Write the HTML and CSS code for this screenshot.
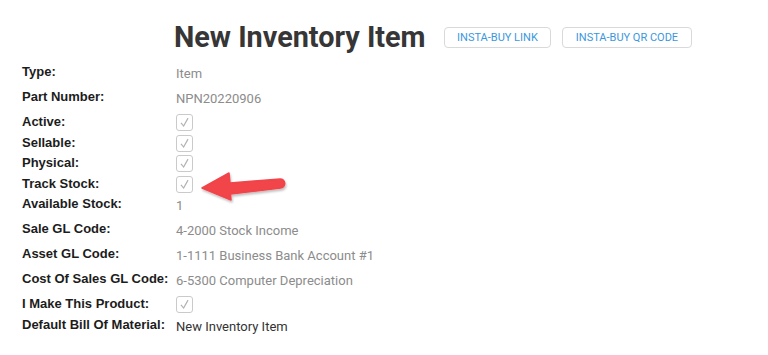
FILE: index.html
```html
<!DOCTYPE html>
<html lang="en">
<head>
    <meta charset="UTF-8">
    <title>New Inventory Item</title>
    <link rel="stylesheet" href="styles.css">
</head>
<body>
    <div class="header">
        <h1 class="title">New Inventory Item</h1>
        <button class="btn">INSTA-BUY LINK</button>
        <button class="btn">INSTA-BUY QR CODE</button>
    </div>

    <div class="fields">
        <div class="field">
            <div class="label">Type:</div>
            <div class="value">Item</div>
        </div>
        <div class="field">
            <div class="label">Part Number:</div>
            <div class="value">NPN20220906</div>
        </div>
        <div class="field check">
            <div class="label">Active:</div>
            <div class="value"><span class="cb"><svg viewBox="0 0 17 17"><path d="M4.5 9 L7.5 12.5 L12.5 3.5"/></svg></span></div>
        </div>
        <div class="field check">
            <div class="label">Sellable:</div>
            <div class="value"><span class="cb"><svg viewBox="0 0 17 17"><path d="M4.5 9 L7.5 12.5 L12.5 3.5"/></svg></span></div>
        </div>
        <div class="field check">
            <div class="label">Physical:</div>
            <div class="value"><span class="cb"><svg viewBox="0 0 17 17"><path d="M4.5 9 L7.5 12.5 L12.5 3.5"/></svg></span></div>
        </div>
        <div class="field check">
            <div class="label">Track Stock:</div>
            <div class="value">
                <span class="cb"><svg viewBox="0 0 17 17"><path d="M4.5 9 L7.5 12.5 L12.5 3.5"/></svg></span>
                <!-- callout arrow -->
                <svg class="arrow" width="100" height="42" viewBox="0 0 100 42">
                    <defs>
                        <filter id="sh" x="-20%" y="-30%" width="140%" height="170%">
                            <feDropShadow dx="1" dy="2" stdDeviation="1.2" flood-color="#000" flood-opacity="0.25"/>
                        </filter>
                    </defs>
                    <path d="M7 22 L34 7 L35 17 L85 13 A4.5 4.5 0 0 1 85.5 22 L35.5 28 L36 34 Z" fill="#f24449" stroke="#f24449" stroke-width="1.5" stroke-linejoin="round" filter="url(#sh)"/>
                </svg>
            </div>
        </div>
        <div class="field">
            <div class="label">Available Stock:</div>
            <div class="value">1</div>
        </div>
        <div class="field">
            <div class="label">Sale GL Code:</div>
            <div class="value">4-2000 Stock Income</div>
        </div>
        <div class="field">
            <div class="label">Asset GL Code:</div>
            <div class="value">1-1111 Business Bank Account #1</div>
        </div>
        <div class="field">
            <div class="label">Cost Of Sales GL Code:</div>
            <div class="value">6-5300 Computer Depreciation</div>
        </div>
        <div class="field check">
            <div class="label">I Make This Product:</div>
            <div class="value"><span class="cb"><svg viewBox="0 0 17 17"><path d="M4.5 9 L7.5 12.5 L12.5 3.5"/></svg></span></div>
        </div>
        <div class="field">
            <div class="label">Default Bill Of Material:</div>
            <div class="value dark">New Inventory Item</div>
        </div>
    </div>
</body>
</html>
```

FILE: styles.css
```css
body{
    margin: 0;
    background: #fff;
    font-family: Roboto, "Liberation Sans", sans-serif;
}
.header{
    display: flex;
    align-items: center;
    padding: 19px 0 0 174px;
    height: 36px;
}
.title{
    margin: 0 18px 0 0;
    font-size: 28.8px;
    line-height: 36px;
    font-weight: 700;
    color: #363636;
}
.btn{
    box-sizing: border-box;
    height: 21px;
    margin: 1px 11px 0 0;
    padding: 0 12.5px;
    background: #fff;
    border: 1px solid #d9d9d9;
    border-radius: 4px;
    font-family: Roboto, sans-serif;
    font-size: 11px;
    color: #3b97dd;
    cursor: pointer;
}
.fields{
    padding: 9px 0 0 22px;
}
.field{
    display: flex;
    height: 25px;
}
.field.check{
    height: 20.5px;
}
.label{
    width: 154px;
    font-family: "Liberation Sans", Arial, sans-serif;
    font-weight: 700;
    font-size: 13px;
    line-height: 16px;
    color: #1c1c1c;
}
.value{
    position: relative;
    padding-top: 2px;
    font-size: 13px;
    line-height: 16px;
    color: #8c8c8c;
}
.check .value{
    padding-top: 0;
}
.value.dark{
    color: #333;
}
.cb{
    display: block;
    box-sizing: border-box;
    width: 17px;
    height: 17px;
    border: 1px solid #cacaca;
    border-radius: 3px;
    background: #fff;
}
.cb svg{
    display: block;
    width: 15px;
    height: 15px;
    fill: none;
    stroke: #b3b3b3;
    stroke-width: 1.4;
}
.arrow{
    position: absolute;
    left: 19px;
    top: -10px;
}
```
